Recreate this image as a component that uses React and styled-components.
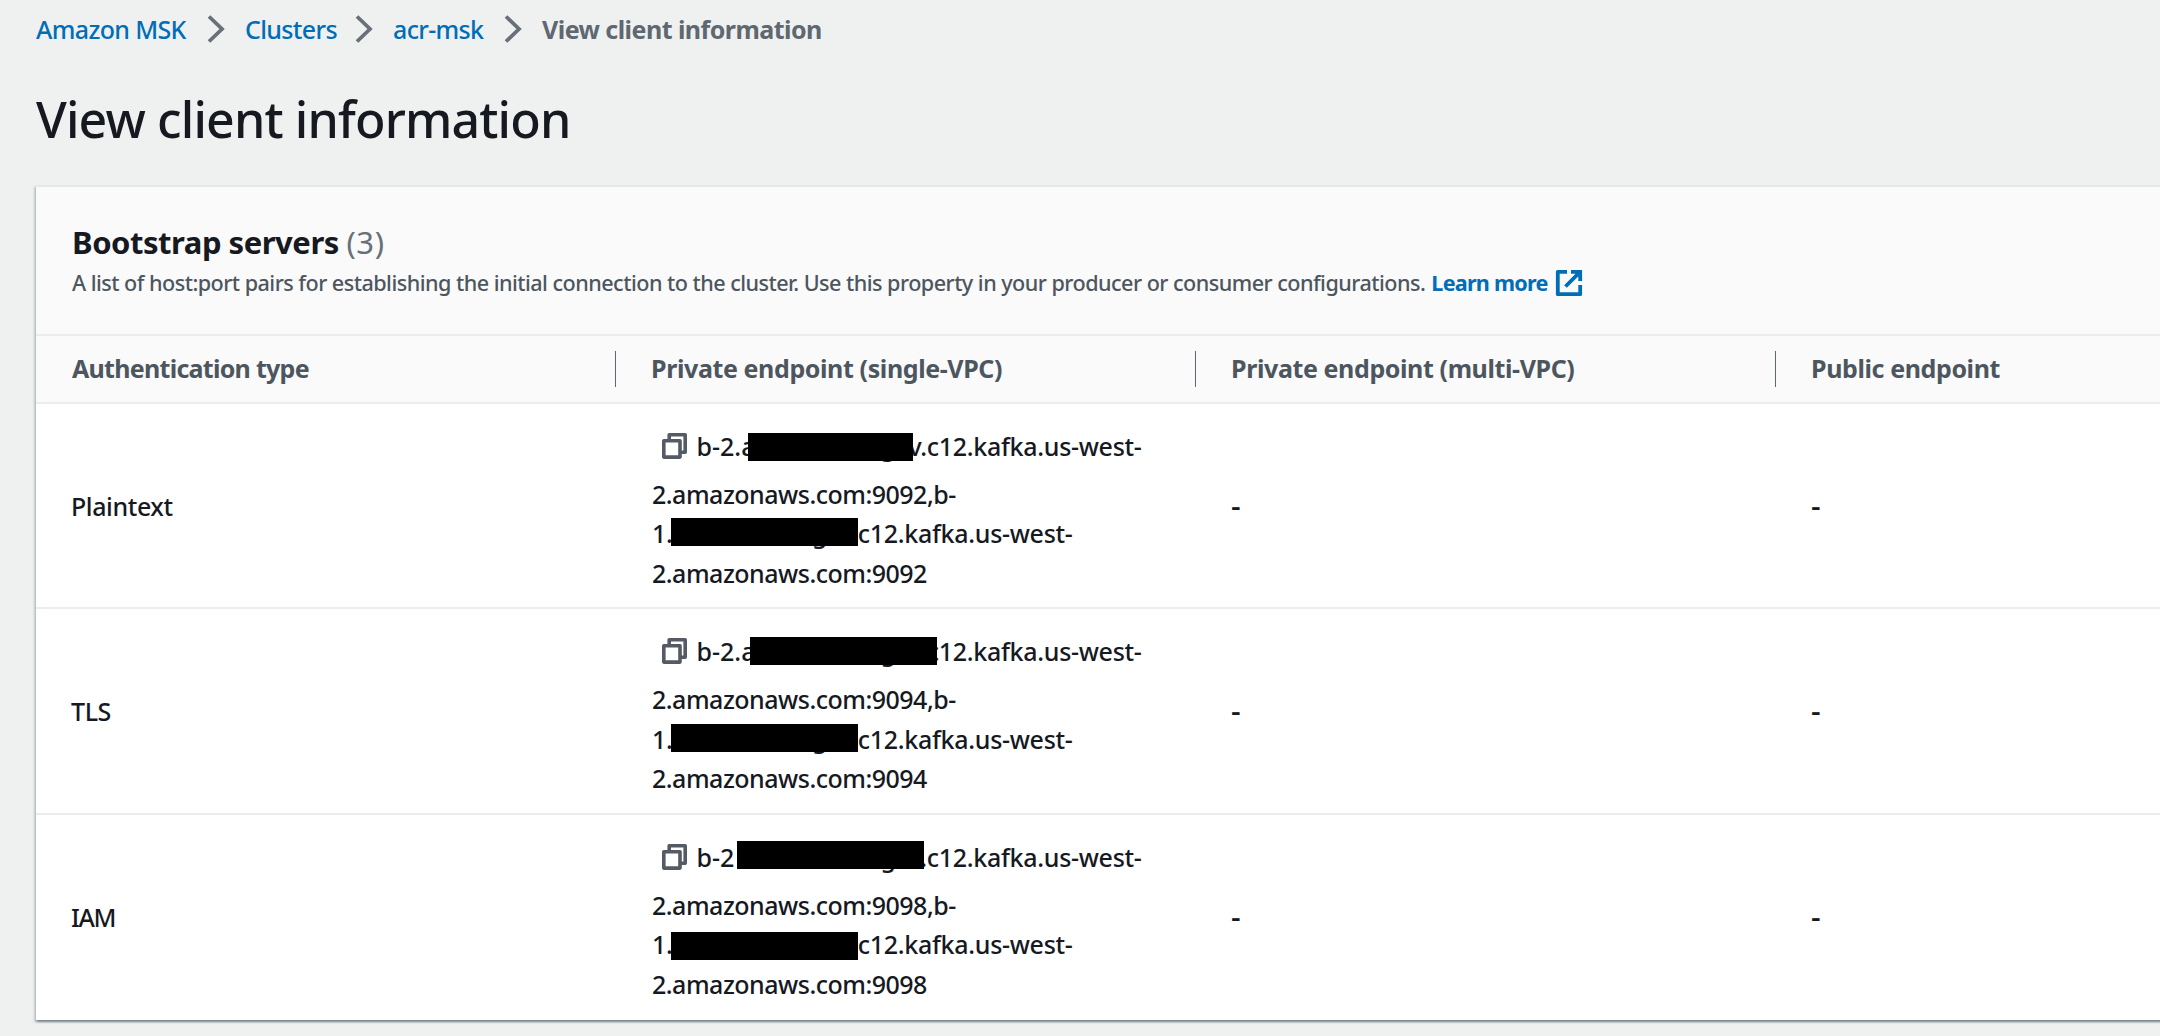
import React from "react";
import styled, { createGlobalStyle } from "styled-components";

const Global = createGlobalStyle`
  * { box-sizing: border-box; }
  html, body { margin: 0; }
  body {
    background: #eff1f1;
    color: #16191f;
    font-family: "Noto Sans", "Open Sans", sans-serif;
    font-size: 25px;
    font-weight: 500;
    overflow: hidden;
  }
`;

const Page = styled.main`
  width: 2160px;
  height: 1036px;
  padding: 8px 0 0 36px;
  overflow: hidden;
`;

const Breadcrumbs = styled.nav`
  display: flex;
  align-items: center;
  height: 42px;
  white-space: nowrap;
`;

const Crumb = styled.a`
  flex: 0 0 auto;
  width: ${(p) => p.$w}px;
  color: #006db7;
  letter-spacing: -0.65px;
`;

const Current = styled.span`
  color: #5f6770;
  font-weight: 700;
  letter-spacing: -0.54px;
`;

const Chevron = styled.svg`
  flex: none;
  width: 18px;
  height: 28px;
  margin: 0 20px;
`;

const Title = styled.h1`
  margin: 34px 0 0;
  height: 101px;
  font-size: 50px;
  font-weight: 500;
  line-height: 70px;
  letter-spacing: -0.85px;
  white-space: nowrap;
`;

const Panel = styled.section`
  width: 2200px;
  background: #fff;
  border-top: 2px solid #e4e8e8;
  box-shadow: 0 2px 2px rgba(0, 28, 36, 0.3), 2px 2px 2px rgba(0, 28, 36, 0.15),
    -2px 2px 2px rgba(0, 28, 36, 0.15);
`;

const PanelHeader = styled.header`
  height: 147px;
  padding: 32px 36px 0;
  background: #fafafa;
  white-space: nowrap;
`;

const Heading = styled.h2`
  margin: 0;
  font-size: 31px;
  line-height: 46px;
  font-weight: 700;
  letter-spacing: -0.47px;
`;

const Counter = styled.span`
  color: #687078;
  font-weight: 400;
  letter-spacing: 0.6px;
`;

const Description = styled.p`
  display: flex;
  align-items: center;
  margin: 0;
  height: 34px;
  font-size: 21.6px;
  color: #4d565f;
  letter-spacing: -0.53px;
`;

const LearnMore = styled.a`
  display: flex;
  align-items: center;
  gap: 7px;
  margin-left: 6px;
  color: #006db7;
  font-weight: 700;
  letter-spacing: -0.75px;

  svg {
    margin-top: 2px;
  }
`;

const Columns = styled.div`
  display: grid;
  grid-template-columns: 579px 580px 580px 1fr;
  align-items: center;
`;

const HeadRow = styled(Columns)`
  height: 70px;
  background: #fafafa;
  border-top: 2px solid #eaeded;
  border-bottom: 2px solid #eaeded;
`;

const HeadCell = styled.div`
  height: 36px;
  padding-left: ${(p) => (p.$first ? 36 : 35)}px;
  line-height: 34px;
  font-weight: 700;
  color: #4d565f;
  letter-spacing: ${(p) => (p.$first ? -0.72 : -0.39)}px;
  white-space: nowrap;
  border-left: ${(p) => (p.$first ? "0" : "1.5px solid #5f6770")};
`;

const BodyRow = styled(Columns)`
  height: 205.4px;
  border-bottom: ${(p) => (p.$last ? "0" : "2px solid #eaeded")};
`;

const Cell = styled.div`
  padding-left: 35px;
  letter-spacing: ${(p) => (p.$tight ? -1.4 : -0.4)}px;
  white-space: nowrap;
`;

const EmptyCell = styled.div`
  padding-left: 36px;
  font-size: 30px;
  line-height: 40px;
`;

const Endpoint = styled.div`
  padding: 14px 0 0 37px;
  align-self: start;
  letter-spacing: -0.5px;
`;

const Line = styled.div`
  position: relative;
  display: flex;
  align-items: center;
  justify-content: ${(p) => (p.$w ? "space-between" : "flex-start")};
  width: ${(p) => (p.$w ? p.$w + "px" : "auto")};
  height: ${(p) => p.$h || 39.6}px;
  white-space: nowrap;
`;

const Host = styled.span`
  letter-spacing: ${(p) => (p.$head ? 0 : -0.3)}px;
`;

const FirstLine = styled.div`
  display: flex;
  align-items: center;
  gap: 10px;
  height: 56px;
  padding-left: 9.5px;
`;

const Mask = styled.span`
  position: absolute;
  left: ${(p) => p.$x}px;
  top: ${(p) => p.$y}px;
  width: ${(p) => p.$w}px;
  height: 28px;
  background: #000;
`;

/* Part of the covered host name whose descender reaches below the mask. */
const Peek = styled.span`
  position: absolute;
  left: ${(p) => p.$x}px;
  top: 0;
  line-height: ${(p) => p.$h}px;
`;

const CopyIcon = () => (
  <svg width="25" height="26" viewBox="0 0 25 26" fill="none" stroke="#545b64" strokeWidth="3.6" strokeLinejoin="round">
    <path d="M1.8 7.7h16.2v16.4h-16.2z" />
    <path d="M7.2 7V1.8h16v17.4h-5" />
  </svg>
);

const ExternalIcon = () => (
  <svg width="28" height="28" viewBox="0 0 28 28" fill="none" stroke="#006db7" strokeWidth="3.8">
    <path d="M12 2.8H2.8v22.4h22.4V16" strokeLinejoin="round" />
    <path d="M16 2.8h9.2V12M24.6 3.4L10.5 17.5" />
  </svg>
);

const Separator = () => (
  <Chevron viewBox="0 0 18 28" fill="none" stroke="#687078" strokeWidth="3.8">
    <path d="M2 1.5L15 14L2 26.5" />
  </Chevron>
);

const servers = [
  { type: "Plaintext", port: "9092", head: "b-2.a", tail: "v.c12.kafka.us-west-", x: 51, y: 15, w: 165.5, y2: 4.5 },
  { type: "TLS", port: "9094", head: "b-2.a", tail: "c12.kafka.us-west-", x: 53.5, y: 14, w: 187, y2: 5.5 },
  { type: "IAM", port: "9098", head: "b-2", tail: ".c12.kafka.us-west-", x: 40, y: 12.5, w: 187, y2: 7.5 },
];

const Server = ({ s, last }) => (
  <BodyRow $last={last}>
    <Cell $tight={s.type === "IAM"}>{s.type}</Cell>
    <Endpoint>
      <FirstLine>
        <CopyIcon />
        <Line $w={445} $h={56}>
          <Host $head>{s.head}</Host>
          <Host>{s.tail}</Host>
          <Peek $x={184} $h={56}>g</Peek>
          <Mask $x={s.x} $y={s.y} $w={s.w} />
        </Line>
      </FirstLine>
      <Line>2.amazonaws.com:{s.port},b-</Line>
      <Line $w={420.5}>
        <Host>1.</Host>
        <Host>c12.kafka.us-west-</Host>
        <Peek $x={160} $h={39.6}>g</Peek>
        <Mask $x={18.5} $y={s.y2} $w={187} />
      </Line>
      <Line>2.amazonaws.com:{s.port}</Line>
    </Endpoint>
    <EmptyCell>-</EmptyCell>
    <EmptyCell>-</EmptyCell>
  </BodyRow>
);

export default function App() {
  return (
    <>
      <Global />
      <Page>
        <Breadcrumbs>
          <Crumb $w={151}>Amazon MSK</Crumb>
          <Separator />
          <Crumb $w={90}>Clusters</Crumb>
          <Separator />
          <Crumb $w={91}>acr-msk</Crumb>
          <Separator />
          <Current>View client information</Current>
        </Breadcrumbs>
        <Title>View client information</Title>
        <Panel>
          <PanelHeader>
            <Heading>
              Bootstrap servers <Counter>(3)</Counter>
            </Heading>
            <Description>
              A list of host:port pairs for establishing the initial connection to the cluster. Use this property in your
              producer or consumer configurations.
              <LearnMore>
                Learn more <ExternalIcon />
              </LearnMore>
            </Description>
          </PanelHeader>
          <HeadRow>
            <HeadCell $first>Authentication type</HeadCell>
            <HeadCell>Private endpoint (single-VPC)</HeadCell>
            <HeadCell>Private endpoint (multi-VPC)</HeadCell>
            <HeadCell>Public endpoint</HeadCell>
          </HeadRow>
          {servers.map((s, i) => (
            <Server key={s.type} s={s} last={i === servers.length - 1} />
          ))}
        </Panel>
      </Page>
    </>
  );
}
